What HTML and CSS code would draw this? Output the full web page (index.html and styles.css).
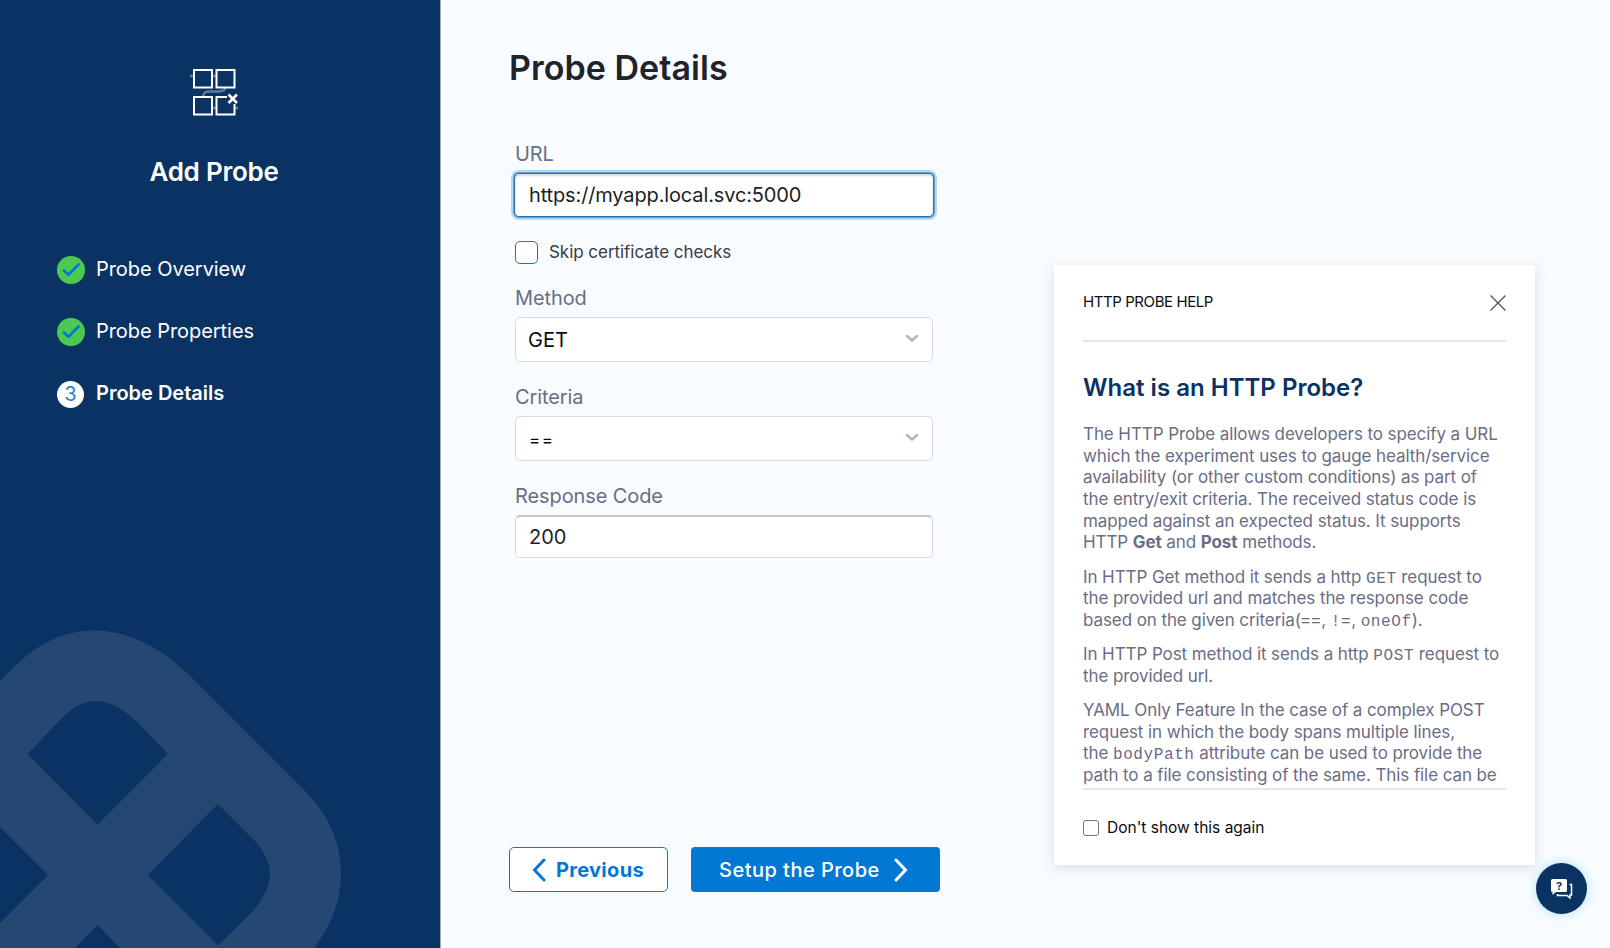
FILE: index.html
```html
<!DOCTYPE html>
<html lang="en">
<head>
<meta charset="utf-8">
<title>Add Probe</title>
<link rel="stylesheet" href="styles.css">
</head>
<body>
<div class="page">
  <aside class="sidebar">
    <svg class="watermark" width="440" height="348" viewBox="0 0 440 348" fill="#254872">
      <path fill-rule="evenodd" d="M0 81 L15 66 Q51 31 92 30.5 Q140 29 187 73 L307 193 Q341 229 341 273 Q341 313 314 348 L120 348 L97.500 325 L75 348 L0 348 L0 323 L48 275 L0 227 Z M27.500 154 L97.500 224.500 L168 154 L136 121 Q115 101 95 101 Q79 101 64 116 Z M147.500 275 L218 345.500 L252 312 Q270 291 270 274 Q270 258 255 241 L218 204 Z"/>
    </svg>
    <div class="brand">
      <svg class="brand-icon" width="50" height="50" viewBox="0 0 50 50" fill="none" stroke="#fff" stroke-width="2">
        <path d="M0 8h4M22 8h5M22 40h5M44 40h4M13 28c1-4 3-4.500 6-4.500h10c4 0 6-1 7-4.500" stroke="#5f7b9e" stroke-width="2.500"/>
        <rect x="4" y="2" width="18" height="17.500"/>
        <rect x="26.500" y="2" width="18" height="17.500"/>
        <rect x="4" y="29" width="18" height="17.500"/>
        <path d="M37 29H26.500V46.500H44.500V36"/>
        <path d="M38.500 26.500l8.500 8.500M47 26.500l-8.500 8.500" stroke-width="2.600"/>
      </svg>
      <h1 class="brand-title">Add Probe</h1>
    </div>
    <ol class="steps">
      <li class="step">
        <svg class="mark" width="29" height="28" viewBox="0 0 29 28"><circle cx="14" cy="14" r="14" fill="#4dc952"/><path d="M7 14.500l4.500 4.200L21.500 8.500" fill="none" stroke="#0278d5" stroke-width="2.800" stroke-linecap="round" stroke-linejoin="round"/></svg>
        <span class="step-a">Probe Overview</span>
      </li>
      <li class="step">
        <svg class="mark" width="29" height="28" viewBox="0 0 29 28"><circle cx="14" cy="14" r="14" fill="#4dc952"/><path d="M7 14.500l4.500 4.200L21.500 8.500" fill="none" stroke="#0278d5" stroke-width="2.800" stroke-linecap="round" stroke-linejoin="round"/></svg>
        <span class="step-b">Probe Properties</span>
      </li>
      <li class="step">
        <span class="number">3</span>
        <span class="step-c">Probe Details</span>
      </li>
    </ol>
  </aside>
  <main class="content">
    <section class="form">
      <h2 class="title">Probe Details</h2>
      <div class="fields">
        <label class="label">URL</label>
        <div class="box focused">https://myapp.local.svc:5000</div>
        <div class="check-row"><span class="checkbox"></span><span class="check-text">Skip certificate checks</span></div>
        <label class="label select-label">Method</label>
        <div class="box select"><span>GET</span>
          <svg width="14" height="9" viewBox="0 0 14 9"><path d="M2 2l5 4.500L12 2" fill="none" stroke="#b0b1c4" stroke-width="2.400" stroke-linecap="round" stroke-linejoin="round"/></svg></div>
        <label class="label select-label">Criteria</label>
        <div class="box select"><span class="equals">==</span>
          <svg width="14" height="9" viewBox="0 0 14 9"><path d="M2 2l5 4.500L12 2" fill="none" stroke="#b0b1c4" stroke-width="2.400" stroke-linecap="round" stroke-linejoin="round"/></svg></div>
        <label class="label select-label">Response Code</label>
        <div class="box plain">200</div>
      </div>
      <div class="actions">
        <button class="btn prev"><svg width="14" height="24" viewBox="0 0 14 24"><path d="M12 2L2.500 12L12 22" fill="none" stroke="#0278d5" stroke-width="3" stroke-linecap="round" stroke-linejoin="miter"/></svg><span>Previous</span></button>
        <button class="btn next"><span>Setup the Probe</span><svg width="14" height="24" viewBox="0 0 14 24"><path d="M2 2L11.500 12L2 22" fill="none" stroke="#fff" stroke-width="3" stroke-linecap="round" stroke-linejoin="miter"/></svg></button>
      </div>
    </section>
    <section class="help">
      <header class="help-head">
        <span class="help-caption">HTTP PROBE HELP</span>
        <svg width="16" height="16" viewBox="0 0 16 16"><path d="M.5.5l15 15M15.500.5l-15 15" stroke="#4f5162" stroke-width="1.300"/></svg>
      </header>
      <div class="help-body">
        <h3 class="help-title">What is an HTTP Probe?</h3>
        <p>The HTTP Probe allows developers to specify a URL<br>which the experiment uses to gauge health/service<br>availability (or other custom conditions) as part of<br>the entry/exit criteria. The received status code is<br>mapped against an expected status. It supports<br>HTTP <b>Get</b> and <b>Post</b> methods.</p>
        <p>In HTTP Get method it sends a http <code>GET</code> request to<br>the provided url and matches the response code<br>based on the given criteria(<code>==</code>, <code>!=</code>, <code>oneOf</code>).</p>
        <p>In HTTP Post method it sends a http <code>POST</code> request to<br>the provided url.</p>
        <p>YAML Only Feature In the case of a complex POST<br>request in which the body spans multiple lines,<br>the <code>bodyPath</code> attribute can be used to provide the<br>path to a file consisting of the same. This file can be</p>
      </div>
      <footer class="help-foot"><span class="tiny-check"></span><span>Don't show this again</span></footer>
    </section>
  </main>
  <button class="chat" aria-label="Help">
    <svg width="24" height="22" viewBox="0 0 24 22"><path d="M2.500 1h13a1.500 1.500 0 0 1 1.500 1.500v10a1.500 1.500 0 0 1-1.500 1.500H6l-3.500 3V14a1.500 1.500 0 0 1-1.500-1.500v-10A1.500 1.500 0 0 1 2.500 1z" fill="#fff"/><path d="M19.500 6.500H21.500V17h-1.500v3L17 17.500H7.500V16" fill="none" stroke="#fff" stroke-width="1.500"/><text x="9" y="11.500" text-anchor="middle" class="chat-q">?</text></svg>
  </button>
</div>
</body>
</html>
```
FILE: styles.css
```css
* { box-sizing: border-box; }
body { margin: 0; font-family: Inter, "Liberation Sans", sans-serif; background: #f8fcff; }
h1, h2, h3, p, ol { margin: 0; padding: 0; }
.page { position: relative; display: flex; width: 1610px; height: 948px; overflow: hidden; }

.sidebar { position: relative; width: 441px; height: 948px; background: #0a3364; border-right: 1px solid #a3a8ad; color: #fff; }
.watermark { position: absolute; left: 0; bottom: 0; }
.brand { display: flex; flex-direction: column; align-items: center; padding: 68px 12px 0 0; }
.brand-icon { display: block; margin-left: 2px; }
.brand-title { margin-top: 34px; font-size: 26px; line-height: 40px; font-weight: 600; letter-spacing: -.25px; }
.steps { list-style: none; display: flex; flex-direction: column; gap: 34px; margin-top: 64px; padding-left: 57px; }
.step { display: flex; align-items: center; gap: 10px; height: 28px; font-size: 20px; line-height: 28px; letter-spacing: -.05px; }
.step span:last-child { margin-top: -3px; }
.mark { display: block; flex: none; }
.number { width: 27px; height: 27px; margin-right: 2px; border-radius: 50%; background: #fff; color: #2a7fd0; text-align: center; line-height: 27px; }
.step-c { font-weight: 600; letter-spacing: 0; }

.content { flex: 1; display: flex; align-items: flex-start; }
.form { display: flex; flex-direction: column; width: 613px; height: 948px; padding: 44px 0 56px 68px; }
.title { font-size: 34px; line-height: 48px; font-weight: 600; letter-spacing: .04px; color: #22222a; }
.fields { width: 418px; margin: 47px 0 0 6px; }
.label { display: block; height: 33px; line-height: 31px; font-size: 20px; letter-spacing: -.1px; color: #6b6d85; }
.select-label { height: 34px; line-height: 30px; }
.box { display: flex; align-items: center; height: 45px; padding: 0 13px; border: 1px solid #d9dae5; border-radius: 5px; background: #fff; font-size: 20px; color: #1c1f24; }
.focused { width: 420px; height: 44px; margin: 1px 0 0 -1px; padding: 0 14px 1px; letter-spacing: -.14px; border: 1px solid #1d76b8; box-shadow: 0 0 0 1px #5f9fcf, 0 0 0 3px #b9d6ea, inset 0 2px 2px rgba(16, 22, 26, .15); }
.check-row { display: flex; align-items: center; height: 23px; margin: 24px 0 19px; gap: 11px; font-size: 17px; letter-spacing: -.04px; color: #383946; }
.checkbox { width: 23px; height: 23px; border: 1.500px solid #0278d5; border-radius: 5px; background: #fff; }
.check-text { margin-top: -2px; }
.select { justify-content: space-between; margin-bottom: 20px; padding-left: 12px; color: #0b0b0d; }
.select svg { margin-top: -3px; }
.equals { margin-left: 1px; padding-top: 3px; font-size: 17px; letter-spacing: 1.500px; }
.plain { height: 43px; border-top: 2px solid #c3c5c8; }
.actions { display: flex; gap: 23px; margin-top: auto; }
.btn { display: flex; align-items: center; height: 45px; padding: 0; border-radius: 4px; font: 500 20px Inter, sans-serif; letter-spacing: .48px; }
.prev { width: 159px; padding-left: 22px; gap: 10px; border: 1px solid #0278d5; background: #fff; color: #0278d5; font-weight: 700; border-radius: 5px; letter-spacing: .3px; }
.next { width: 249px; padding-left: 28px; gap: 14px; border: 0; background: #0278d5; color: #fff; }

.help { display: flex; flex-direction: column; width: 481px; height: 600px; margin-top: 265px; padding: 0 29px; background: #fff; box-shadow: 0 3px 12px rgba(40, 60, 90, .15); }
.help-head { display: flex; align-items: center; justify-content: space-between; height: 77px; border-bottom: 2px solid #e3e4ee; font-size: 15px; letter-spacing: -.42px; color: #0b0b0d; }
.help-caption { margin-top: -2px; }
.help-body { height: 448px; overflow: hidden; border-bottom: 2px solid #e3e4ee; color: #6b6d85; font-size: 17px; line-height: 21.650px; letter-spacing: -.09px; }
.help-title { margin: 28px 0 18px; font-size: 24px; line-height: 36px; font-weight: 600; letter-spacing: .02px; color: #0a3364; }
.help-body p { margin-bottom: 12.600px; white-space: nowrap; }
.help-body code { font-family: "Liberation Mono", monospace; font-size: 16px; line-height: 1; letter-spacing: .6px; }
.help-foot { display: flex; align-items: center; gap: 8px; margin-top: 27px; font-size: 15.500px; line-height: 22px; color: #0b0b0d; }
.tiny-check { width: 16px; height: 16px; border: 1px solid #767676; border-radius: 3px; background: #fff; }

.chat { position: absolute; left: 1536px; top: 863px; width: 51px; height: 51px; padding: 0; border: 0; border-radius: 50%; background: #0a3364; box-shadow: 0 0 8px 2px rgba(110, 200, 230, .35); display: grid; place-items: center; }
.chat-q { fill: #0a3364; font: 700 11px Inter, sans-serif; }
```
